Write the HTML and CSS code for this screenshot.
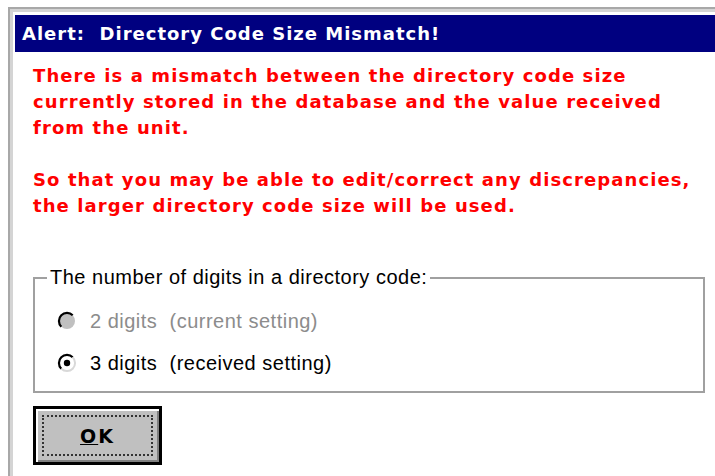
FILE: index.html
```html
<!DOCTYPE html>
<html>
<head>
<meta charset="utf-8">
<title>Alert</title>
<link rel="stylesheet" href="styles.css">
</head>
<body>
<div class="frame">
  <div class="frame-inner">
    <div class="dialog">
      <div class="titlebar">Alert:&nbsp; Directory Code Size Mismatch!</div>
      <div class="content">
        <p class="warning">There is a mismatch between the directory code size<br>currently stored in the database and the value received<br>from the unit.</p>
        <p class="warning">So that you may be able to edit/correct any discrepancies,<br>the larger directory code size will be used.</p>
        <fieldset class="group">
          <legend>The number of digits in a directory code:</legend>
          <div class="option disabled">
            <svg class="radio" width="20" height="20" viewBox="0 0 20 20">
              <circle cx="10" cy="10" r="8" fill="#c0c0c0"/>
              <path d="M4.3 15.7 A8 8 0 0 1 15.7 4.3" fill="none" stroke="#000" stroke-width="2.2"/>
            </svg>
            <span>2 digits&nbsp; (current setting)</span>
          </div>
          <div class="option">
            <svg class="radio" width="20" height="20" viewBox="0 0 20 20">
              <circle cx="10" cy="10" r="8" fill="#fff"/>
              <path d="M4.3 15.7 A8 8 0 0 1 15.7 4.3" fill="none" stroke="#000" stroke-width="2.2"/>
              <path d="M15.7 4.3 A8 8 0 0 1 4.3 15.7" fill="none" stroke="#d8d8d8" stroke-width="2"/>
              <circle cx="10" cy="10" r="3.2" fill="#000"/>
            </svg>
            <span>3 digits&nbsp; (received setting)</span>
          </div>
        </fieldset>
        <div class="buttons">
          <button class="btn"><span class="focus"><u>O</u>K</span></button>
        </div>
      </div>
    </div>
  </div>
</div>
</body>
</html>
```

FILE: styles.css
```css
html, body {
  margin: 0;
  padding: 0;
  background: #fff;
  overflow: hidden;
  width: 715px;
  height: 476px;
}

.frame {
  margin: 7px 0 0 8px;
  width: 740px;
  height: 467px;
  border-top: 2px solid #a8a8a8;
  border-left: 2px solid #a8a8a8;
  border-bottom: 2px solid #d8d8d8;
}

.frame-inner {
  height: 100%;
  box-sizing: border-box;
  border-top: 3px solid #d4d4d4;
  border-left: 3px solid #d4d4d4;
  padding: 3px 0 0 2px;
}

.dialog {
  height: 100%;
  background: #fff;
  display: flex;
  flex-direction: column;
}

.titlebar {
  background: #000080;
  color: #fff;
  height: 37px;
  line-height: 37px;
  padding-left: 7px;
  font-family: "DejaVu Sans", "Liberation Sans", sans-serif;
  font-weight: bold;
  font-size: 18px;
  letter-spacing: 1px;
  white-space: nowrap;
}

.content {
  padding: 11px 0 0 18px;
  display: flex;
  flex-direction: column;
}

.warning {
  margin: 0 0 26px 0;
  color: #ff0000;
  font-family: "DejaVu Sans", "Liberation Sans", sans-serif;
  font-weight: bold;
  font-size: 18px;
  line-height: 26px;
  letter-spacing: 1.1px;
  white-space: nowrap;
}

.group {
  margin: 21px 0 0 0;
  width: 672px;
  height: 127px;
  box-sizing: border-box;
  border: 2px solid #a0a0a0;
  padding: 19px 0 0 22px;
  font-family: "Liberation Sans", Arial, sans-serif;
  font-size: 20px;
  letter-spacing: 0.5px;
}

.group legend {
  padding: 0 3px;
  margin-left: -10px;
  color: #000;
}

.option {
  display: flex;
  align-items: center;
  gap: 13px;
  height: 26px;
  margin-bottom: 16px;
  color: #000;
}

.option.disabled {
  color: #8c8c8c;
}

.radio {
  flex: none;
}

.buttons {
  margin-top: 13px;
  display: flex;
}

.btn {
  width: 129px;
  height: 59px;
  background: #c0c0c0;
  border: 3px solid #000;
  box-shadow: inset 2px 2px 0 #fff, inset -2px -2px 0 #808080;
  padding: 6px;
  margin: 0;
  display: flex;
}

.focus {
  flex: 1;
  display: flex;
  align-items: center;
  justify-content: center;
  border: 2px dotted #333;
  font-family: "DejaVu Sans", "Liberation Sans", sans-serif;
  font-weight: bold;
  font-size: 19px;
  letter-spacing: 2px;
  color: #000;
}
```
